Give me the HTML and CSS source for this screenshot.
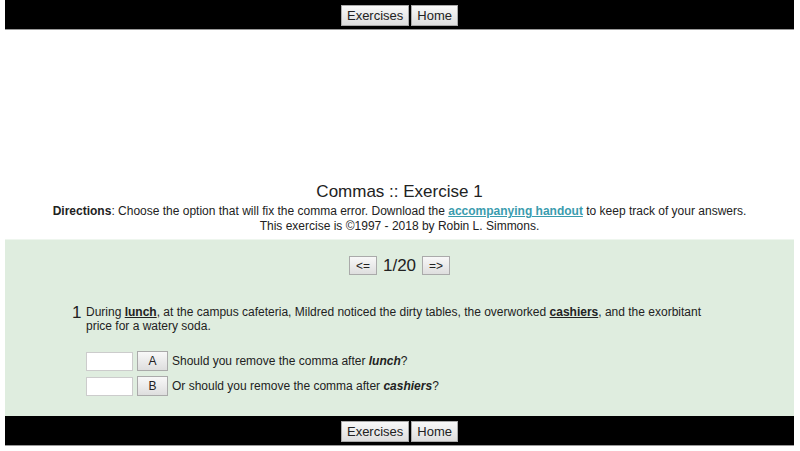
FILE: index.html
```html
<!DOCTYPE html>
<html lang="en">
<head>
    <meta charset="UTF-8">
    <title>Commas :: Exercise 1</title>
    <link rel="stylesheet" href="styles.css">
</head>
<body>
    <div class="page">
        <div class="navbar">
            <button class="navbtn">Exercises</button><button class="navbtn">Home</button>
        </div>

        <div class="adspace"></div>

        <div class="header">
            <h1>Commas :: Exercise 1</h1>
            <p><strong>Directions</strong>: Choose the option that will fix the comma error. Download the <a href="#">accompanying handout</a> to keep track of your answers.</p>
            <p>This exercise is &copy;1997 - 2018 by Robin L. Simmons.</p>
        </div>

        <div class="exercise">
            <div class="pager">
                <button class="small">&lt;=</button>
                <span class="count">1/20</span>
                <button class="small">=&gt;</button>
            </div>

            <div class="question">
                <span class="num">1</span>
                <p>During <u><b>lunch</b></u>, at the campus cafeteria, Mildred noticed the dirty tables, the overworked <u><b>cashiers</b></u>, and the exorbitant price for a watery soda.</p>
            </div>

            <div class="options">
                <div class="option">
                    <input type="text">
                    <button class="small letter">A</button>
                    <span>Should you remove the comma after <b><i>lunch</i></b>?</span>
                </div>
                <div class="option">
                    <input type="text">
                    <button class="small letter">B</button>
                    <span>Or should you remove the comma after <b><i>cashiers</i></b>?</span>
                </div>
            </div>
        </div>

        <div class="navbar">
            <button class="navbtn">Exercises</button><button class="navbtn">Home</button>
        </div>
    </div>
</body>
</html>
```

FILE: styles.css
```css
body {
    margin: 0;
    font-family: "Liberation Sans", Arial, sans-serif;
    font-size: 12px;
    color: #222;
    background: #fff;
}
.page {
    margin: 0 6px 0 5px;
}
.navbar {
    background: #000;
    height: 30px;
    display: flex;
    justify-content: center;
    align-items: center;
    border-bottom: 1px solid #999;
    box-sizing: border-box;
}
.navbtn {
    font-family: "Liberation Sans", Arial, sans-serif;
    font-size: 13px;
    color: #222;
    background: linear-gradient(#f8f8f8, #dedede);
    border: 1px solid #aaa;
    height: 21px;
    padding: 0 5px;
    margin: 2px 1px 0;
    border-radius: 0;
}
.adspace {
    height: 151px;
}
.header {
    text-align: center;
    padding-bottom: 5px;
}
.header h1 {
    font-size: 17px;
    font-weight: normal;
    margin: 0 0 1px;
    line-height: 22px;
}
.header p {
    margin: 0;
    line-height: 15px;
}
.header a {
    color: #3a9cae;
    font-weight: bold;
}
.exercise {
    background: #dfeddf;
    border-top: 1px solid #eef6ee;
    padding: 16px 0 20px;
}
.pager {
    display: flex;
    justify-content: center;
    align-items: center;
    gap: 6px;
    height: 19px;
}
.count {
    font-size: 17px;
    line-height: 19px;
}
.small {
    font-family: "Liberation Sans", Arial, sans-serif;
    font-size: 12px;
    color: #222;
    background: linear-gradient(#f8f8f8, #dedede);
    border: 1px solid #aaa;
    height: 19px;
    padding: 0 6px;
    border-radius: 0;
}
.question {
    display: flex;
    margin: 30px 0 0 67px;
    width: 640px;
}
.num {
    font-size: 17px;
    width: 14px;
    flex: none;
    line-height: 20px;
    margin-top: -2px;
}
.question p {
    margin: 0;
    line-height: 14px;
}
.options {
    margin: 18px 0 0 81px;
    display: flex;
    flex-direction: column;
    gap: 5px;
}
.option {
    display: flex;
    align-items: center;
    gap: 4px;
}
.option input {
    width: 47px;
    height: 19px;
    box-sizing: border-box;
    border: 1px solid #ccc;
    background: #fff;
    margin: 0;
}
.letter {
    width: 31px;
    height: 20px;
}
```
